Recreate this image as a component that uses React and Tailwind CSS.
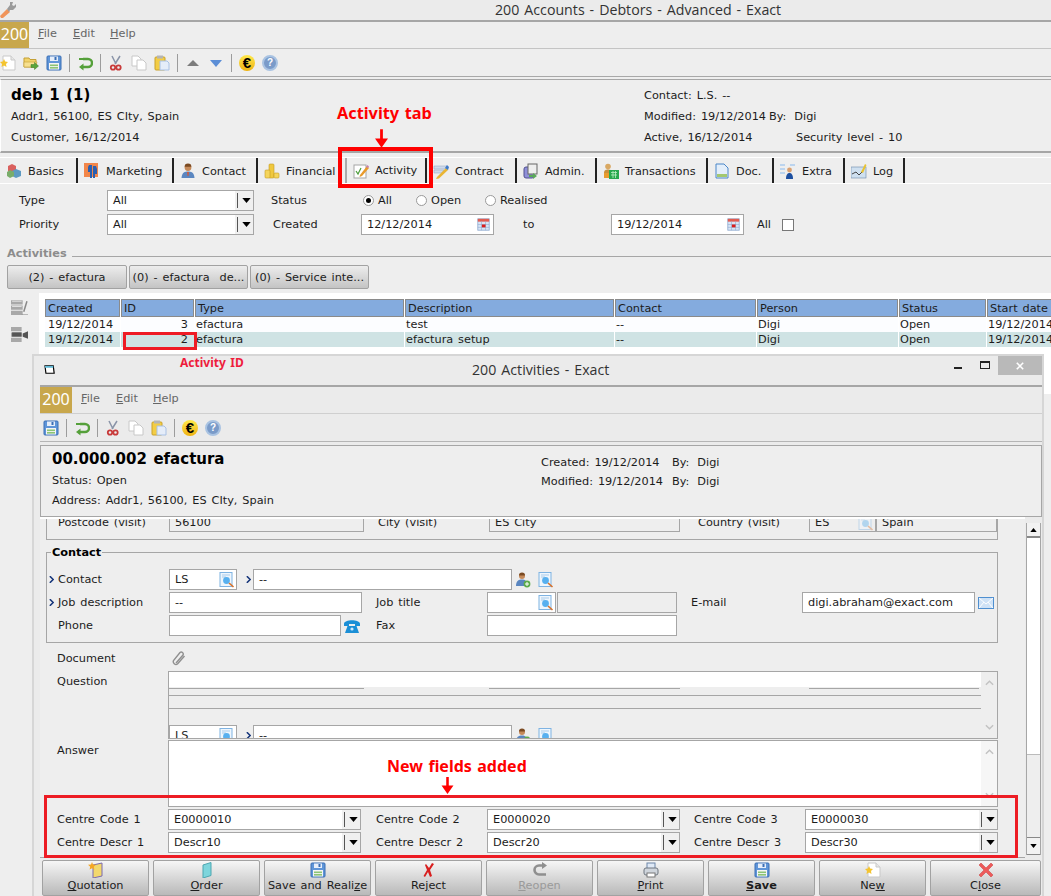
import React from "react";

const Ic = ({ children, className = "w-4 h-4" }) => (
  <svg viewBox="0 0 16 16" className={`${className} shrink-0`}>{children}</svg>
);

const Wrench = () => (
  <Ic>
    <path d="M0 14 L7 7 L10 10 L3 16 L1 16Z" fill="#f0945a" />
    <path d="M7 7 L10 3 L10 0 L13 0 L12 3 L14 4 L16 2 L16 5 L13 8 L10 8 L9 10Z" fill="#9a9a9a" />
  </Ic>
);
const NewDoc = () => (
  <Ic>
    <path d="M3 1 H11 L15 5 V15 H3Z" fill="#fff" stroke="#c9c9c9" />
    <path d="M11 1 V5 H15" fill="#e8e8e8" stroke="#c9c9c9" />
    <path d="M4 4 L5.2 6.6 L8 7 L6 9 L6.5 12 L4 10.5 L1.5 12 L2 9 L0 7 L2.8 6.6Z" fill="#f4c430" />
  </Ic>
);
const OpenFolder = () => (
  <Ic>
    <path d="M1 3 H6 L7 4.5 H13 V12 H1Z" fill="#f2d36b" stroke="#c4a035" />
    <path d="M1 7 H14 L12.5 12 H1Z" fill="#f7e08f" stroke="#c4a035" strokeWidth=".6" />
    <path d="M8 9.5 H11.5 V7.5 L15.5 11 L11.5 14.5 V12.5 H8Z" fill="#59a53b" stroke="#3e7d28" strokeWidth=".5" />
  </Ic>
);
const Save = () => (
  <Ic>
    <rect x="1" y="1" width="14" height="14" rx="1" fill="#5f95d8" stroke="#3b6fb5" />
    <rect x="4" y="1.5" width="8" height="4.5" fill="#e6eefa" />
    <rect x="8.5" y="2" width="2" height="3" fill="#3b6fb5" />
    <rect x="3" y="8" width="10" height="6.5" fill="#f5f5f5" />
    <rect x="4" y="9.5" width="8" height="1.6" fill="#8cc474" />
    <rect x="4" y="12" width="8" height="1.6" fill="#8cc474" />
  </Ic>
);
const Undo = () => (
  <Ic>
    <path d="M6 4 H11 A4 4 0 0 1 11 12 H4" fill="none" stroke="#55a03a" strokeWidth="2.4" />
    <path d="M6.5 8.5 L2 12 L6.5 15.5Z" fill="#55a03a" />
    <path d="M6 3 H2 V5 H6Z" fill="#55a03a" />
  </Ic>
);
const Cut = () => (
  <Ic>
    <path d="M7 9 L12 1 M8 9 L4 1" stroke="#8a94a8" strokeWidth="1.5" />
    <circle cx="5" cy="12.5" r="2.2" fill="none" stroke="#c83a3a" strokeWidth="1.8" />
    <circle cx="10.5" cy="12.5" r="2.2" fill="none" stroke="#c83a3a" strokeWidth="1.8" />
  </Ic>
);
const Copy = () => (
  <Ic>
    <path d="M1 1 H7 L10 4 V11 H1Z" fill="#fff" stroke="#c8c8c8" />
    <path d="M6 5 H12 L15 8 V15 H6Z" fill="#fff" stroke="#c8c8c8" />
  </Ic>
);
const Paste = () => (
  <Ic>
    <rect x="1" y="2" width="10" height="13" rx="1" fill="#f3cd45" stroke="#c9a22c" />
    <rect x="3" y="0.5" width="6" height="3" fill="#b5b5b5" />
    <path d="M6 6 H13 L15 8 V15 H6Z" fill="#e5edf9" stroke="#a9c1e4" />
  </Ic>
);
const Up = () => <Ic><path d="M2 11 L8 5 L14 11Z" fill="#7c7c7c" /></Ic>;
const Down = () => <Ic><path d="M2 5 H14 L8 12Z" fill="#5b8ed6" /></Ic>;
const Euro = () => (
  <span className="flex h-4 w-4 shrink-0 items-center justify-center rounded-full bg-gradient-to-b from-[#ffe94a] to-[#eeb20c] font-['Liberation_Sans'] text-[15px] leading-none font-bold text-black">€</span>
);
const Help = () => (
  <span className="flex h-4 w-4 shrink-0 items-center justify-center rounded-full border-2 border-[#a9c3e2] bg-[#7a9bc9] font-['Liberation_Sans'] text-[10px] leading-none font-bold text-white">?</span>
);
const Sep = () => <span className="h-[18px] w-px shrink-0 bg-[#9c9c9c]" />;

const Cubes = () => (
  <Ic>
    <path d="M2 3 L6 1 L10 3 V8 L6 10 L2 8Z" fill="#d9605e" />
    <path d="M6 8 L10 6 L15 8 V13 L10 15 L6 13Z" fill="#5d9ac2" />
    <path d="M1 9 L4 7 L8 9 V13 L4 15 L1 13Z" fill="#79ad6a" />
  </Ic>
);
const Marketing = () => (
  <Ic>
    <rect x="0" y="0" width="14" height="14" fill="#f2864a" />
    <path d="M5 2 H8 V15 H6 V9 H4 V4Z M9 3 H12 L13 6 V11 H11 V15 H9Z" fill="#2a5fb0" />
  </Ic>
);
const Person = () => (
  <Ic>
    <circle cx="8" cy="4.5" r="3.4" fill="#c58a5a" />
    <path d="M4.6 3.8 A3.4 3.4 0 0 1 11.4 3.8Z" fill="#7b4a22" />
    <path d="M1.5 15 C2 9 5 8.5 8 8.5 C11 8.5 14 9 14.5 15Z" fill="#5a86c0" />
    <path d="M7 9 H9 L8.5 13 H7.5Z" fill="#d05b3c" />
  </Ic>
);
const Coins = () => (
  <Ic>
    <rect x="5" y="1" width="5" height="14" rx="1" fill="#f0c83e" stroke="#c49c22" strokeWidth=".6" />
    <rect x="1" y="7" width="5" height="8" rx="1" fill="#f5d55c" stroke="#c49c22" strokeWidth=".6" />
    <rect x="10" y="10" width="5" height="5" rx="1" fill="#f5d55c" stroke="#c49c22" strokeWidth=".6" />
  </Ic>
);
const Note = () => (
  <Ic>
    <rect x="1" y="2" width="12" height="13" fill="#fff" stroke="#a5a5a5" />
    <path d="M3 8 L5 11 L8 5" stroke="#4c9c3a" fill="none" strokeWidth="1.2" />
    <path d="M7 12 L14 3 L16 5 L9 13 L6.5 14Z" fill="#e89a2b" />
    <path d="M13 4 L14.5 2 L16 3.5 L15 5Z" fill="#c77fb0" />
  </Ic>
);
const ContractI = () => (
  <Ic>
    <path d="M1 3 H14 L12 6 H1Z M1 7 H11 L9 10 H1Z" fill="#cfd9e8" stroke="#8aa1c0" strokeWidth=".5" />
    <path d="M4 14 L13 5 L15 7 L6 15.5 L3 16Z" fill="#eab533" />
    <path d="M12 5 L14 2 L16 4 L15 7Z" fill="#3d79c8" />
  </Ic>
);
const Admin = () => (
  <Ic>
    <rect x="1" y="4" width="10" height="11" rx="2" fill="#8f8fd8" stroke="#50508f" />
    <rect x="5" y="1" width="9" height="10" fill="#eee" stroke="#666" />
    <path d="M6 12 L10 12 L10 10 L14 13 L10 16 V14 H6Z" fill="#5aa85a" />
  </Ic>
);
const Trans = () => (
  <Ic>
    <circle cx="5" cy="3.5" r="2.8" fill="#d9a862" />
    <path d="M1 10 C1 7 3 6.5 5 6.5 C7 6.5 9 7 9 10Z" fill="#c98f3a" />
    <rect x="6" y="7" width="10" height="9" fill="#29a84e" />
    <path d="M8 9.5 H14 M8 12 H14 M10 8 V15 M12.5 8 V15" stroke="#bdf0c4" strokeWidth=".8" />
    <rect x="1" y="10" width="5" height="5" fill="#e89b2e" />
  </Ic>
);
const Doc = () => (
  <Ic>
    <path d="M2 1 H10 L14 5 V15 H2Z" fill="#e3eefa" stroke="#4a86c8" />
    <rect x="3" y="11" width="10" height="3" fill="#a3c86f" />
  </Ic>
);
const Extra = () => (
  <Ic>
    <path d="M0 1 H5 V3 H0Z M0 5 H5 V7 H0Z M0 9 H5 V11 H0Z M10 1 H15 V3 H10Z" fill="#bcd4ee" />
    <circle cx="9.5" cy="7" r="2.4" fill="#d9a070" />
    <path d="M6 16 C6 11 8 10 9.5 10 C11 10 13 11 13 16Z" fill="#1d4fa0" />
  </Ic>
);
const LogI = () => (
  <Ic>
    <rect x="0" y="4" width="15" height="11" fill="#cfe0f0" stroke="#6a87a8" strokeWidth=".6" />
    <path d="M1 11 L5 9 L8 12 L12 8" stroke="#333" fill="none" strokeWidth=".9" />
    <path d="M10 9 L14 1 L15.5 2 L12 10Z" fill="#e9c22f" />
  </Ic>
);
const Search = ({ dim }) => (
  <Ic>
    <g opacity={dim ? 0.4 : 1}>
      <rect x="1" y="0.5" width="12" height="14" fill="#eef6fd" stroke="#7fb3e2" />
      <path d="M3 3 H11 M3 5 H7" stroke="#a9cbea" />
      <circle cx="7.5" cy="8.5" r="3.4" fill="#58b0ef" />
      <path d="M10 11 L14.5 15" stroke="#d9722a" strokeWidth="1.6" />
    </g>
  </Ic>
);
const AddPerson = () => (
  <Ic>
    <circle cx="7" cy="4" r="3" fill="#c58a5a" />
    <path d="M4 3.5 A3 3 0 0 1 10 3.5Z" fill="#7b4a22" />
    <path d="M1 14 C1 8.5 4 7.5 7 7.5 C10 7.5 12 8.5 12 14Z" fill="#5a86c0" />
    <circle cx="12" cy="12" r="3.4" fill="#5cab4a" />
    <path d="M12 10 V14 M10 12 H14" stroke="#fff" />
  </Ic>
);
const Phone = () => (
  <Ic>
    <path d="M0 6 C0 1 16 1 16 6 V8 H11 V6 H5 V8 H0Z" fill="#1b8fd6" />
    <path d="M3.5 8 H12.5 L15 15 H1Z" fill="#1b8fd6" />
    <circle cx="8" cy="11" r="1.6" fill="#cfeaff" />
  </Ic>
);
const Mail = () => (
  <Ic>
    <rect x="0.5" y="2.5" width="15" height="11" fill="#cfe2f6" stroke="#4f8fd0" />
    <path d="M1 3 L8 9 L15 3 M1 13 L6 7 M15 13 L10 7" stroke="#fff" fill="none" />
  </Ic>
);
const Clip = () => (
  <Ic>
    <path d="M5 12 L12 4 A2 2 0 0 0 9 1.5 L2.5 9.5 A2.8 2.8 0 0 0 6.5 13 L13.5 5" fill="none" stroke="#8f8f8f" strokeWidth="1.4" />
  </Ic>
);
const Calendar = () => (
  <Ic className="h-[13px] w-[13px]">
    <rect x="1" y="1" width="14" height="14" fill="#d9e5f5" stroke="#8eaad0" />
    <rect x="1" y="1" width="14" height="3.5" fill="#e15c52" />
    <path d="M1 8 H15 M1 11.5 H15 M5.5 4 V15 M10.5 4 V15" stroke="#8eaad0" strokeWidth=".7" />
    <rect x="6" y="8" width="4.5" height="3.5" fill="#d81e1e" />
  </Ic>
);
const ListA = () => (
  <Ic className="h-[17px] w-[17px]">
    <path d="M0 2 H11 V6 H0Z M0 7 H11 V11 H0Z M0 12 H11 V16 H0Z" fill="#a8a8a8" />
    <path d="M1 3 H10 M1 8 H10" stroke="#dedede" />
    <path d="M12 13 L15 3" stroke="#888" strokeWidth="1.4" />
    <path d="M10 16 H16" stroke="#888" />
  </Ic>
);
const ListB = () => (
  <Ic className="h-[17px] w-[17px]">
    <path d="M0 1 H10 V5 H0Z M0 6 H10 V10 H0Z M0 11 H10 V15 H0Z" fill="#a8a8a8" />
    <path d="M1 6 H10 V10 H1Z" fill="#555" />
    <path d="M11 7 L16 5 V12 L11 10Z" fill="#555" />
  </Ic>
);
const Quot = () => (
  <Ic>
    <path d="M5 3 L14 1 V14 L5 16Z" fill="#f2d86d" stroke="#7a6ab0" />
    <path d="M4 0 L5 2.4 L8 2.8 L5.8 4.8 L6.4 7.6 L4 6.2 L1.6 7.6 L2.2 4.8 L0 2.8 L3 2.4Z" fill="#f5a623" />
  </Ic>
);
const Door = () => (
  <Ic><path d="M4 3 L12 0.5 V13.5 L4 16Z" fill="#7dd5dc" stroke="#4da6b0" /></Ic>
);
const RedX = () => (
  <Ic><path d="M5 2 L8 6 L11 1 L13 2 L9 8 L11 14 L9 15 L7 10 L4 15 L2.5 14 L6 8 L4 3Z" fill="#d81e1e" /></Ic>
);
const Reopen = () => (
  <Ic>
    <path d="M13 3.5 H7 A4.5 4.5 0 0 0 7 12.5 H14" fill="none" stroke="#8f8f8f" strokeWidth="2.6" />
    <path d="M10 0 L15 3.5 L10 7Z" fill="#8f8f8f" />
  </Ic>
);
const Printer = () => (
  <Ic>
    <rect x="4" y="1" width="8" height="6" fill="#dfe9f6" stroke="#6d86a8" />
    <rect x="1" y="6" width="14" height="7" rx="2" fill="#cfd5dc" stroke="#6f7780" />
    <rect x="4" y="11" width="8" height="4" fill="#fff" stroke="#777" />
  </Ic>
);
const CloseX = () => (
  <Ic><path d="M3 1 L8 6 L13 1 L15 3 L10 8 L15 13 L13 15 L8 10 L3 15 L1 13 L6 8 L1 3Z" fill="#ee5a5a" stroke="#c73a3a" strokeWidth=".5" /></Ic>
);

const Menu = ({ w }) => (
  <div className="flex h-[26px] items-center text-[#666]">
    <span className={`${w} flex h-full items-center justify-center bg-[#c8a74c] pb-[2px] font-['Noto_Sans'] text-[16px] text-white`}>200</span>
    <span className="ml-[9px] w-[35px] pb-[2px]"><u>F</u>ile</span>
    <span className="w-[37px] pb-[2px]"><u>E</u>dit</span>
    <span className="pb-[2px]"><u>H</u>elp</span>
  </div>
);

const TABS = [
  ["Basics", Cubes, "w-[78px]"],
  ["Marketing", Marketing, "w-[96px]"],
  ["Contact", Person, "w-[84px]"],
  ["Financial", Coins, "w-[89px] border-r-[#aaaaaa]"],
  ["Activity", Note, "w-[80px]"],
  ["Contract", ContractI, "w-[90px]"],
  ["Admin.", Admin, "w-[80px]"],
  ["Transactions", Trans, "w-[111px]"],
  ["Doc.", Doc, "w-[66px]"],
  ["Extra", Extra, "w-[71px]"],
  ["Log", LogI, "w-[60px]"],
];

const Box = ({ className = "", children }) => (
  <div className={`flex h-[21px] shrink-0 items-center border border-[#a6a6a6] bg-white pl-[5px] ${className}`}>{children}</div>
);
const Select = ({ w, v }) => (
  <Box className={w}>
    <span className="flex-1">{v}</span>
    <span className="flex h-full w-[18px] items-center justify-center bg-[#f0f0f0]">
      <span className="h-[15px] w-px bg-[#555]" />
      <svg viewBox="0 0 10 6" className="ml-[4px] h-[5px] w-[9px]"><path d="M0 0 H10 L5 6Z" fill="#000" /></svg>
    </span>
  </Box>
);
const DateBox = ({ v }) => (
  <Box className="w-[133px] justify-between pr-[3px]">
    <span>{v}</span>
    <Calendar />
  </Box>
);
const Radio = ({ on, label, w }) => (
  <span className={`flex items-center ${w}`}>
    <span className="flex h-[11px] w-[11px] items-center justify-center rounded-full border border-[#9a9a9a] bg-white">
      {on && <span className="h-[5px] w-[5px] rounded-full bg-black" />}
    </span>
    <span className="ml-[4px]">{label}</span>
  </span>
);
const Chev = () => (
  <svg viewBox="0 0 6 8" className="h-[7px] w-[5px] shrink-0"><path d="M1 0 L5 4 L1 8" fill="none" stroke="#15357a" strokeWidth="1.8" /></svg>
);

const HEAD = ["Created", "ID", "Type", "Description", "Contact", "Person", "Status", "Start date"];
const COLS = "grid grid-cols-[75px_73px_209px_209px_141px_141px_87px_70px] gap-x-px";
const Row = ({ id, d, bg }) => (
  <div className={COLS}>
    {["19/12/2014", id, "efactura", d, "--", "Digi", "Open", "19/12/2014"].map((t, i) => (
      <div key={i} className={`flex h-[15px] items-center overflow-hidden whitespace-nowrap ${bg} ${i === 1 ? "justify-end pr-[6px]" : i === 0 ? "pl-[3px]" : "pl-[1px]"}`}>{t}</div>
    ))}
  </div>
);

const Scroll = ({ bg }) => (
  <div className={`flex w-[16px] shrink-0 flex-col items-center justify-between py-[8px] ${bg}`}>
    <svg viewBox="0 0 10 6" className="h-[6px] w-[9px]"><path d="M1 5 L5 1 L9 5" fill="none" stroke="#c2c2c2" strokeWidth="1.6" /></svg>
    <svg viewBox="0 0 10 6" className="h-[6px] w-[9px]"><path d="M1 1 L5 5 L9 1" fill="none" stroke="#c2c2c2" strokeWidth="1.6" /></svg>
  </div>
);

const Btn = ({ icon: I, children, w = "w-[107px]", cls = "" }) => (
  <div className={`flex h-[36px] ${w} shrink-0 flex-col items-center rounded-[2px] border border-[#a2a2a2] bg-gradient-to-b from-[#f6f6f6] to-[#b9b9b9] pt-[1px] ${cls}`}>
    <I />
    <span className="mt-[2px] leading-none">{children}</span>
  </div>
);

const Arrow = ({ className }) => (
  <svg viewBox="0 0 14 20" className={`absolute ${className}`}>
    <path d="M5.5 0 H8.5 V10 H14 L7 20 L0 10 H5.5Z" fill="#ff0000" />
  </svg>
);

function Activities() {
  return (
    <div className="absolute top-[354px] left-[32px] flex h-[542px] w-[1012px] flex-col overflow-hidden border-x-2 border-t-2 border-[#d6d6d6] bg-[#ebebeb]">
      <div className="flex h-[29px] shrink-0 items-center">
        <svg viewBox="0 0 14 12" className="ml-[10px] h-[11px] w-[13px] shrink-0">
          <path d="M1 1 H10 L11 9 H2Z" fill="#fff" stroke="#000" strokeWidth="1.3" />
          <path d="M1 1 H10 V3 H1Z" fill="#5fb9d6" />
        </svg>
        <span className="ml-[415px] font-['Open_Sans'] text-[14.2px] text-[#333]">200 Activities - Exact</span>
        <span className="ml-auto flex items-center self-stretch">
          <span className="mt-[-5px] h-[2px] w-[8px] bg-[#222]" />
          <span className="mt-[-11px] ml-[18px] h-[8px] w-[10px] border border-t-2 border-[#222]" />
          <span className="ml-[8px] flex h-[19px] w-[44px] items-center justify-center self-start bg-[#b9b9b9]">
            <svg viewBox="0 0 10 10" className="h-[8px] w-[8px]"><path d="M1 1 L9 9 M9 1 L1 9" stroke="#fff" strokeWidth="2" /></svg>
          </span>
        </span>
      </div>
      <div className="ml-[6px] flex min-h-0 flex-1 flex-col">
        <div className="border-t-2 border-b border-t-[#a6a6a6] border-b-[#cfcfcf]"><Menu w="w-[32px]" /></div>
        <div className="flex h-[28px] shrink-0 items-center gap-[7px] border-b border-[#b5b5b5] pl-[3px]">
          <Save /><Sep /><Undo /><Sep /><Cut /><Copy /><Paste /><Sep /><Euro /><Help />
        </div>
        <div className="mt-[3px] flex h-[72px] shrink-0 border border-[#a6a6a6] bg-[#eeeeee] pt-[3px] pl-[11px]">
          <div className="w-[489px]">
            <div className="flex h-[21px] items-center text-[15px] leading-none font-bold text-black">00.000.002 efactura</div>
            <div className="mt-px flex h-[20px] items-center">Status: Open</div>
            <div className="flex h-[19px] items-center">Address: Addr1, 56100, ES CIty, Spain</div>
          </div>
          <div className="pt-[3px]">
            <div className="flex h-[21px] items-center"><span className="w-[131px]">Created: 19/12/2014</span><span>By: <span className="ml-[3px]">Digi</span></span></div>
            <div className="flex h-[18px] items-center"><span className="w-[131px]">Modified: 19/12/2014</span><span>By: <span className="ml-[3px]">Digi</span></span></div>
          </div>
        </div>
        <div className="flex min-h-0 flex-1">
          <div className="h-[341px] w-[985px] shrink-0 overflow-hidden border-t-2 border-b border-t-white border-b-[#a6a6a6] bg-[#eeeeee]">
            <div className="mt-[-8px] ml-[6px] w-[952px] border-x border-b border-[#a6a6a6] pb-[7px]">
              <div className="flex h-[21px] items-center">
                <span className="w-[122px] pt-[3px] pl-[11px]">Postcode (visit)</span>
                <Box className="w-[195px] pt-[3px] !bg-[#eeeeee]">56100</Box>
                <span className="w-[125px] pt-[3px] pl-[14px]">City (visit)</span>
                <Box className="w-[191px] pt-[3px] !bg-[#eeeeee]">ES City</Box>
                <span className="w-[129px] pt-[3px] pl-[18px]">Country (visit)</span>
                <Box className="w-[67px] justify-between pt-[3px] pr-[1px] !bg-[#eeeeee]"><span>ES</span><Search dim /></Box>
                <Box className="w-[121px] pt-[3px] !bg-[#eeeeee]">Spain</Box>
              </div>
            </div>
            <fieldset className="mt-[5px] ml-[6px] w-[952px] border border-[#a6a6a6] pb-[6px]">
              <legend className="ml-[4px] px-px pt-px leading-[13px] font-bold text-black">Contact</legend>
              <div className="mt-[10px] flex flex-col gap-[2px]">
                <div className="flex h-[21px] items-center">
                  <span className="flex w-[122px] items-center pl-[2px]"><Chev /><span className="ml-[4px]">Contact</span></span>
                  <Box className="w-[68px] justify-between pr-[1px]"><span>LS</span><Search /></Box>
                  <span className="ml-[9px] w-[7px]"><Chev /></span>
                  <Box className="w-[259px]">--</Box>
                  <span className="ml-[3px]"><AddPerson /></span>
                  <span className="ml-[7px]"><Search /></span>
                </div>
                <div className="flex h-[21px] items-center">
                  <span className="flex w-[122px] items-center pl-[2px]"><Chev /><span className="ml-[4px]">Job description</span></span>
                  <Box className="w-[193px]">--</Box>
                  <span className="ml-[14px] w-[111px]">Job title</span>
                  <Box className="w-[69px] justify-end pr-[1px]"><Search /></Box>
                  <Box className="ml-px w-[120px] !bg-[#eeeeee]" />
                  <span className="ml-[14px] w-[111px]">E-mail</span>
                  <Box className="w-[173px]">digi.abraham@exact.com</Box>
                  <span className="ml-[3px]"><Mail /></span>
                </div>
                <div className="flex h-[21px] items-center">
                  <span className="w-[122px] pl-[11px]">Phone</span>
                  <Box className="w-[172px]" />
                  <span className="ml-[3px]"><Phone /></span>
                  <span className="ml-[16px] w-[111px]">Fax</span>
                  <Box className="w-[190px]" />
                </div>
              </div>
            </fieldset>
            <div className="pl-[17px]">
              <div className="mt-[5px] flex h-[21px] items-center">
                <span className="w-[111px]">Document</span>
                <span className="ml-[3px]"><Clip /></span>
              </div>
              <div className="mt-[2px] flex w-[941px]">
                <span className="w-[111px] pt-[5px]">Question</span>
                <div className="flex h-[68px] w-[830px] border border-[#a6a6a6]">
                  <div className="min-w-0 flex-1 overflow-hidden">
                    <div className="h-[15px] bg-white" />
                    <div className="flex h-[2px]">
                      <span className="w-[195px] border-b border-[#a6a6a6]" />
                      <span className="ml-[125px] w-[191px] border-b border-[#a6a6a6]" />
                      <span className="ml-[129px] w-[170px] border-b border-[#a6a6a6]" />
                    </div>
                    <div className="mt-[6px] border-b border-[#a6a6a6]" />
                    <div className="mt-[12px] border-b border-[#a6a6a6]" />
                    <div className="mt-[16px] flex h-[21px] items-center">
                      <Box className="w-[68px] justify-between pr-[1px]"><span>LS</span><Search /></Box>
                      <span className="ml-[9px] w-[7px]"><Chev /></span>
                      <Box className="w-[259px]">--</Box>
                      <span className="ml-[3px]"><AddPerson /></span>
                      <span className="ml-[7px]"><Search /></span>
                    </div>
                  </div>
                  <Scroll bg="bg-[#eeeeee]" />
                </div>
              </div>
              <div className="mt-px flex w-[941px]">
                <span className="w-[111px] pt-[5px]">Answer</span>
                <div className="flex h-[67px] w-[830px] border border-[#a6a6a6] bg-white">
                  <div className="flex-1" />
                  <Scroll bg="bg-[#f6f6f6]" />
                </div>
              </div>
              <div className="mt-[2px] flex flex-col gap-[2px]">
                {[["Centre Code", "E00000"], ["Centre Descr", "Descr"]].map(([l, p]) => (
                  <div key={l} className="flex h-[21px] items-center">
                    {[1, 2, 3].map((n) => (
                      <React.Fragment key={n}>
                        <span className={`w-[111px] ${n === 1 ? "" : n === 2 ? "ml-[15px]" : "ml-[14px]"}`}>{l} {n}</span>
                        <Select w="w-[193px]" v={`${p}${n}0`} />
                      </React.Fragment>
                    ))}
                  </div>
                ))}
              </div>
            </div>
          </div>
          <div className="mt-[6px] ml-px flex h-[332px] w-[15px] shrink-0 flex-col border-x border-[#a6a6a6]">
            <div className="flex h-[15px] items-center justify-center border-b-2 border-[#888] bg-[#f2f2f2]">
              <svg viewBox="0 0 8 5" className="h-[4px] w-[7px]"><path d="M0 5 L4 0 L8 5Z" fill="#000" /></svg>
            </div>
            <div className="h-[217px] border-b border-[#bbb] bg-white" />
            <div className="flex-1 bg-[#eeeeee]" />
            <div className="flex h-[18px] items-center justify-center border-y border-[#888] bg-[#f2f2f2]">
              <svg viewBox="0 0 8 5" className="h-[4px] w-[7px]"><path d="M0 0 L8 0 L4 5Z" fill="#000" /></svg>
            </div>
          </div>
        </div>
        <div className="flex shrink-0 gap-[4px] pt-[2px] pl-[2px]">
          <Btn icon={Quot}><u>Q</u>uotation</Btn>
          <Btn icon={Door}><u>O</u>rder</Btn>
          <Btn icon={Save}>Save and Reali<u>z</u>e</Btn>
          <Btn icon={RedX}>Re<u>j</u>ect</Btn>
          <Btn icon={Reopen} cls="text-[#9a9a9a]"><u>R</u>eopen</Btn>
          <Btn icon={Printer}><u>P</u>rint</Btn>
          <Btn icon={Save} cls="font-bold"><u>S</u>ave</Btn>
          <Btn icon={NewDoc}>Ne<u>w</u></Btn>
          <Btn icon={CloseX} w="w-[111px]">C<u>l</u>ose</Btn>
        </div>
      </div>
    </div>
  );
}

export default function App() {
  return (
    <div className="relative h-[896px] w-[1051px] overflow-hidden bg-[#eeeeee] font-['DejaVu_Sans',sans-serif] text-[11.3px] leading-none text-[#1c1c1c] [word-spacing:1.3px]">
      <div className="flex h-[20px] items-center bg-[#ebebeb]">
        <Wrench />
        <span className="ml-[479px] pb-[1px] font-['Open_Sans'] text-[14.2px] leading-[18px] text-[#333]">200 Accounts - Debtors - Advanced - Exact</span>
      </div>
      <div className="border-t-2 border-b border-t-[#a6a6a6] border-b-[#c4c4c4]"><Menu w="w-[29px]" /></div>
      <div className="flex h-[28px] items-center gap-[7px] border-b border-[#a8a8a8]">
        <NewDoc /><OpenFolder /><Save /><Sep /><Undo /><Sep /><Cut /><Copy /><Paste /><Sep /><Up /><Down /><Sep /><Euro /><Help />
      </div>
      <div className="mt-[2px] flex h-[74px] border-t border-b-2 border-l border-t-[#a6a6a6] border-b-[#a6a6a6] border-l-white pt-[5px]">
        <div className="w-[643px] pl-[10px]">
          <div className="flex h-[21px] items-center text-[15px] font-bold text-black">deb 1 (1)</div>
          <div className="flex h-[21px] items-center">Addr1, 56100, ES CIty, Spain</div>
          <div className="flex h-[21px] items-center">Customer, 16/12/2014</div>
        </div>
        <div>
          <div className="flex h-[21px] items-center">Contact: L.S. --</div>
          <div className="flex h-[21px] items-center"><span className="w-[125px]">Modified: 19/12/2014</span><span>By: <span className="ml-[3px]">Digi</span></span></div>
          <div className="flex h-[21px] items-center"><span className="w-[152px]">Active, 16/12/2014</span><span>Security level - 10</span></div>
        </div>
      </div>
      <div className="mt-[4px] flex h-[27px] border-y border-white">
        {TABS.map(([t, I, w]) => (
          <div key={t} className={`flex ${w} items-center border-r-2 border-[#222] pl-[6px]`}>
            <I /><span className={`ml-[6px] ${t === "Activity" ? "" : "pt-[2px]"}`}>{t}</span>
          </div>
        ))}
      </div>
      <div className="mt-[6px] flex flex-col gap-[3px]">
        <div className="flex h-[21px] items-center pl-[19px]">
          <span className="w-[88px]">Type</span>
          <Select w="w-[147px]" v="All" />
          <span className="ml-[17px] w-[92px]">Status</span>
          <Radio on label="All" w="w-[53px]" />
          <Radio label="Open" w="w-[69px]" />
          <Radio label="Realised" />
        </div>
        <div className="flex h-[21px] items-center pl-[19px]">
          <span className="w-[88px]">Priority</span>
          <Select w="w-[147px]" v="All" />
          <span className="ml-[19px] w-[88px]">Created</span>
          <DateBox v="12/12/2014" />
          <span className="ml-[29px] w-[88px]">to</span>
          <DateBox v="19/12/2014" />
          <span className="ml-[13px] w-[25px]">All</span>
          <span className="h-[12px] w-[12px] border border-[#777] bg-white" />
        </div>
      </div>
      <div className="mt-[12px] flex h-[14px] items-center pl-[7px]">
        <span className="w-[65px] font-bold text-[#8c8c8c]">Activities</span>
        <span className="mt-[4px] h-px flex-1 bg-[#a6a6a6]" />
      </div>
      <div className="mt-[4px] flex gap-[2px] pl-[7px]">
        {["(2) - efactura", "(0) - efactura  de...", "(0) - Service inte..."].map((t, i) => (
          <div key={t} className={`flex h-[24px] shrink-0 items-center justify-center rounded-[2px] border border-[#a2a2a2] bg-gradient-to-b from-[#ededed] to-[#c4c4c4] pt-px whitespace-pre ${i === 0 ? "w-[120px]" : "w-[119px]"}`}>{t}</div>
        ))}
      </div>
      <div className="mt-[4px] flex h-[101px]">
        <div className="flex w-[39px] shrink-0 flex-col gap-[11px] pt-[5px] pl-[11px]"><ListA /><ListB /></div>
        <div className="flex-1 bg-white pt-[6px] pl-[6px]">
          <div className={COLS}>
            {HEAD.map((h) => (
              <div key={h} className="flex h-[18px] items-center overflow-hidden border border-[#8a8a8a] bg-[#84abde] pt-px pl-[2px] whitespace-nowrap">{h}</div>
            ))}
          </div>
          <Row id="3" d="test" bg="bg-[#fcfdff]" />
          <Row id="2" d="efactura setup" bg="bg-[#cfe3e4]" />
        </div>
      </div>

      <Activities />

      <div className="absolute top-[104px] left-[337px] font-['Noto_Sans'] text-[16.3px] leading-[18px] font-bold text-[#ff0000]">Activity tab</div>
      <Arrow className="top-[129px] left-[375px] h-[19px] w-[13px]" />
      <div className="absolute top-[147px] left-[338px] h-[41px] w-[95px] border-[4px] border-[#ff0000]" />
      <div className="absolute top-[332px] left-[123px] h-[18px] w-[74px] border-[3px] border-[#ee1c25]" />
      <div className="absolute top-[356px] left-[180px] font-['Noto_Sans'] text-[12px] leading-[14px] font-bold text-[#ee1c3c]">Activity ID</div>
      <div className="absolute top-[757px] left-[387px] font-['Noto_Sans'] text-[16px] leading-[18px] font-bold text-[#ff0000]">New fields added</div>
      <Arrow className="top-[777px] left-[441px] h-[17px] w-[13px]" />
      <div className="absolute top-[795px] left-[44px] h-[63px] w-[974px] border-[3px] border-[#ed1c24]" />
    </div>
  );
}
